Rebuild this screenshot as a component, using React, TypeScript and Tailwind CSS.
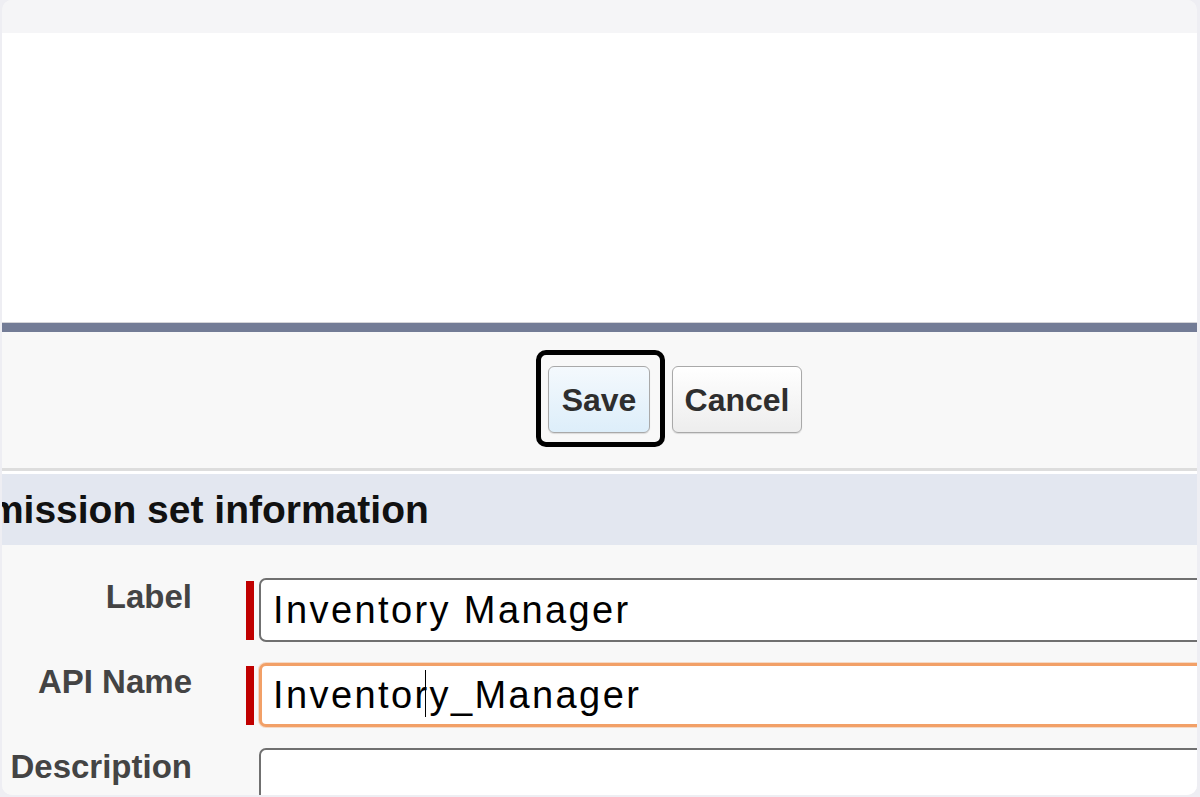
import React from "react";

const font = { fontFamily: '"Liberation Sans", Arial, Helvetica, sans-serif' };

function RequiredBar({ show }: { show: boolean }) {
  return <div className={show ? "h-[59px] w-[8px] bg-[#c00000]" : "h-[59px] w-[8px]"} />;
}

function FieldRow({
  label,
  required,
  focused,
  children,
}: {
  label: string;
  required: boolean;
  focused?: boolean;
  children?: React.ReactNode;
}) {
  return (
    <div className="flex items-start">
      <div className="w-[190px] shrink-0 pt-[1px] text-right text-[33px] font-bold leading-[36px] text-[#444]">
        {label}
      </div>
      <div className="ml-[54px] flex h-[64px] items-center">
        <RequiredBar show={required} />
      </div>
      <div
        className={
          focused
            ? "ml-[5px] flex h-[64px] w-[1000px] shrink-0 items-center rounded-[7px] border-[3px] border-[#f2a067] bg-white pl-[11px] shadow-[0_0_0_1px_rgba(242,160,103,0.35)]"
            : "ml-[5px] flex h-[64px] w-[1000px] shrink-0 items-center rounded-[7px] border-2 border-[#707070] bg-white pl-[12px]"
        }
      >
        <div className="whitespace-nowrap text-[38px] leading-[60px] tracking-[2.4px] text-black">{children}</div>
      </div>
    </div>
  );
}

export default function App() {
  return (
    <div className="h-[797px] w-[1200px] overflow-hidden bg-[#eeeef3] pb-[2px] pl-[2px] pr-[3px]" style={font}>
      <div className="flex h-full flex-col overflow-hidden rounded-[10px] bg-[#f8f8f8]">
        {/* window top strip */}
        <div className="h-[33px] shrink-0 bg-[#f5f5f7] shadow-[0_1px_2px_rgba(0,0,0,0.04)]" />
        {/* empty white content */}
        <div className="h-[289px] shrink-0 bg-white" />
        <div className="h-px shrink-0 bg-[#d4d4d8]" />
        <div className="h-[9px] shrink-0 bg-[#737c96]" />

        {/* button bar */}
        <div className="h-[136px] shrink-0 bg-[#f8f8f8] pl-[546px] pt-[34px]">
          <div className="flex items-start gap-[22px]">
            <div className="relative">
              <div className="absolute -bottom-[14px] -left-[12px] -right-[15px] -top-[16px] rounded-[10px] border-[5px] border-black" />
              <button className="flex h-[67px] w-[102px] items-center justify-center rounded-[6px] border border-[#a9a9a9] bg-gradient-to-b from-[#f4f9fd] to-[#ddeefa] text-[32px] font-bold text-[#2e2e2e] shadow-[0_1px_1px_rgba(0,0,0,0.12)]">
                Save
              </button>
            </div>
            <button className="flex h-[67px] w-[130px] items-center justify-center rounded-[6px] border border-[#a9a9a9] bg-gradient-to-b from-white to-[#ededed] text-[32px] font-bold text-[#2e2e2e] shadow-[0_1px_1px_rgba(0,0,0,0.12)]">
              Cancel
            </button>
          </div>
        </div>

        <div className="h-[3px] shrink-0 bg-[#dddddd]" />
        <div className="h-[3px] shrink-0 bg-white" />

        {/* section header */}
        <div className="h-[71px] shrink-0 overflow-hidden bg-[#e3e7f0]">
          <h2 className="ml-[-76px] whitespace-nowrap text-[39px] font-bold leading-[71px] text-[#111]">
            Permission set information
          </h2>
        </div>

        {/* form */}
        <div className="flex flex-1 flex-col gap-[21px] overflow-hidden bg-[#f8f8f8] pt-[33px]">
          <FieldRow label="Label" required>
            Inventory Manager
          </FieldRow>
          <FieldRow label="API Name" required focused>
            Inventor
            <span className="relative inline-block h-[47px] w-0 align-middle">
              <span className="absolute left-[-5px] top-[-4px] h-[47px] w-[1.5px] bg-black" />
            </span>
            y_Manager
          </FieldRow>
          <FieldRow label="Description" required={false} />
        </div>
      </div>
    </div>
  );
}
